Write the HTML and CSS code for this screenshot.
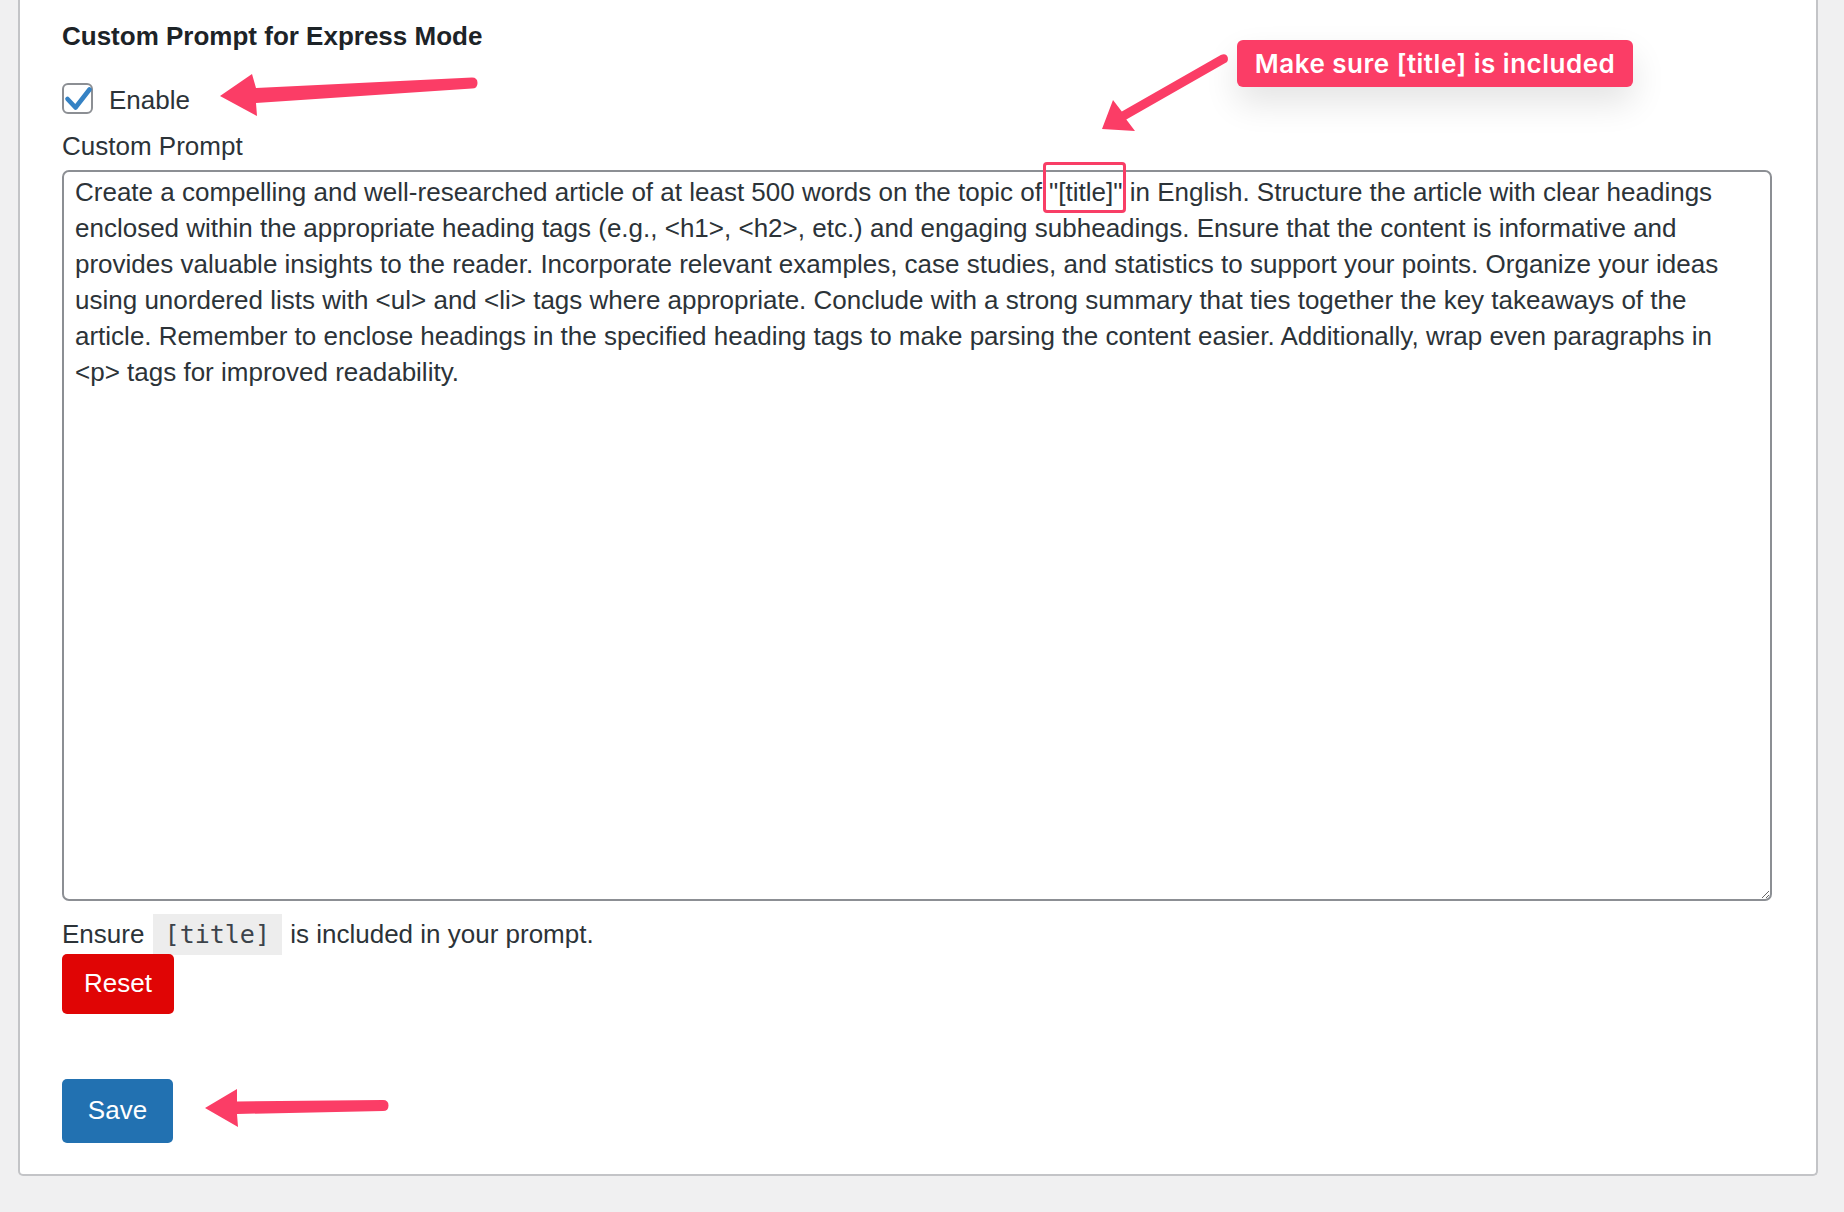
FILE: index.html
```html
<!DOCTYPE html>
<html lang="en">
<head>
<meta charset="utf-8">
<title>Custom Prompt for Express Mode</title>
<link rel="stylesheet" href="styles.css">
</head>
<body>
<div class="page">
  <div class="panel">
    <h3 class="title">Custom Prompt for Express Mode</h3>
    <label class="enable">
      <span class="checkbox">
        <svg viewBox="0 0 31 31" width="31" height="31" aria-hidden="true"><path d="M5.5 16 L13.5 24.5 L27.5 6.5" fill="none" stroke="#3582c4" stroke-width="4.6" stroke-linecap="round" stroke-linejoin="round"/></svg>
      </span>
      <span class="enable-text">Enable</span>
    </label>
    <label class="field-label" for="prompt">Custom Prompt</label>
    <div class="field">
      <textarea id="prompt" class="prompt" spellcheck="false">Create a compelling and well-researched article of at least 500 words on the topic of "[title]" in English. Structure the article with clear headings enclosed within the appropriate heading tags (e.g., &lt;h1&gt;, &lt;h2&gt;, etc.) and engaging subheadings. Ensure that the content is informative and provides valuable insights to the reader. Incorporate relevant examples, case studies, and statistics to support your points. Organize your ideas using unordered lists with &lt;ul&gt; and &lt;li&gt; tags where appropriate. Conclude with a strong summary that ties together the key takeaways of the article. Remember to enclose headings in the specified heading tags to make parsing the content easier. Additionally, wrap even paragraphs in &lt;p&gt; tags for improved readability.</textarea>
      <span class="highlight"></span>
    </div>
    <p class="hint">Ensure <code class="code">[title]</code> is included in your prompt.</p>
    <button class="btn btn-reset" type="button">Reset</button>
    <button class="btn btn-save" type="button">Save</button>
  </div>

  <div class="badge">Make sure [title] is included</div>

  <svg class="marks" width="1844" height="1212" viewBox="0 0 1844 1212" aria-hidden="true">
    <path class="arrow" d="M220,96 L252,74 L256,88 L472,77.5 Q477.5,77.5 477.5,83 Q477.5,88.5 472,88.5 L256,103 L257,116 Z"/>
    <path class="arrow" d="M1102,129 L1113,100 L1121.8,111.6 L1220.8,55.1 Q1226,52.8 1227.8,57.4 Q1228.6,61.6 1225.3,62.9 L1126.3,119.4 L1135,131 Z"/>
    <path class="arrow" d="M205,1108 L237,1089 L237,1101.5 L383,1100 Q388.5,1100 388.5,1105.5 Q388.5,1111 383,1111 L237,1114 L238,1127 Z"/>
  </svg>
</div>
</body>
</html>
```

FILE: styles.css
```css
* {
  box-sizing: border-box;
}

html,
body {
  margin: 0;
  padding: 0;
  background: #f0f0f1;
}

body {
  font-family: "Liberation Sans", Arial, Helvetica, sans-serif;
  color: #2c3338;
  font-size: 26px;
  line-height: 36px;
}

.page {
  position: relative;
  width: 1844px;
  height: 1212px;
  padding-left: 18px;
  overflow: hidden;
}

.panel {
  width: 1800px;
  background: #fff;
  border: 2px solid #c3c4c7;
  border-top: 0;
  border-radius: 0 0 5px 5px;
  padding: 18px 0 31px 42px;
  display: flex;
  flex-direction: column;
  align-items: flex-start;
}

.title {
  margin: 0;
  font-size: 26px;
  line-height: 36px;
  font-weight: 700;
  color: #1d2327;
}

.enable {
  margin-top: 28px;
  display: flex;
  align-items: flex-start;
  gap: 16px;
  height: 36px;
}

.checkbox {
  margin-top: 1px;
  width: 31px;
  height: 31px;
  border: 2px solid #8c8f94;
  border-radius: 6px;
  background: #fff;
  position: relative;
  display: block;
}

.checkbox svg {
  position: absolute;
  left: -2px;
  top: -2px;
}

.enable-text {
  display: block;
  line-height: 36px;
}

.field-label {
  margin-top: 10px;
  display: block;
  line-height: 36px;
}

.field {
  position: relative;
  margin-top: 6px;
}

.prompt {
  display: block;
  width: 1710px;
  height: 731px;
  border: 2px solid #8c8f94;
  border-radius: 7px;
  padding: 2px 11px 1px;
  font-family: "Liberation Sans", Arial, Helvetica, sans-serif;
  font-size: 26px;
  line-height: 36px;
  color: #2c3338;
  background: #fff;
  resize: vertical;
  outline: none;
  overflow: auto;
}

.highlight {
  position: absolute;
  left: 981px;
  top: -8px;
  width: 83px;
  height: 51px;
  border: 3px solid #f83e66;
  border-radius: 4px;
  pointer-events: none;
}

.hint {
  margin: 15px 0 0;
  line-height: 36px;
}

.code {
  font-family: "DejaVu Sans Mono", "Liberation Mono", monospace;
  font-size: 25px;
  background: rgba(0, 0, 0, 0.07);
  color: #3c434a;
  padding: 6px 12px 6px;
  margin: 0 1px;
}

.btn {
  display: block;
  border: 0;
  border-radius: 5px;
  color: #fff;
  font-family: "Liberation Sans", Arial, Helvetica, sans-serif;
  font-size: 26px;
  line-height: 36px;
  padding: 0 0 3px;
  cursor: pointer;
}

.btn-reset {
  margin-top: 1px;
  width: 112px;
  height: 60px;
  background: #e00505;
}

.btn-save {
  margin-top: 65px;
  width: 111px;
  height: 64px;
  background: #2271b1;
}

.badge {
  position: absolute;
  left: 1237px;
  top: 40px;
  width: 396px;
  height: 47px;
  background: #fb3d66;
  color: #fff;
  border-radius: 6px;
  font-family: Inter, "Noto Sans", sans-serif;
  font-weight: 600;
  font-size: 26px;
  letter-spacing: 0.5px;
  line-height: 47px;
  text-align: center;
  box-shadow: 0 16px 34px rgba(0, 0, 0, 0.11);
}

.marks {
  position: absolute;
  left: 0;
  top: 0;
  pointer-events: none;
}

.arrow {
  fill: #fb3d66;
}
```
